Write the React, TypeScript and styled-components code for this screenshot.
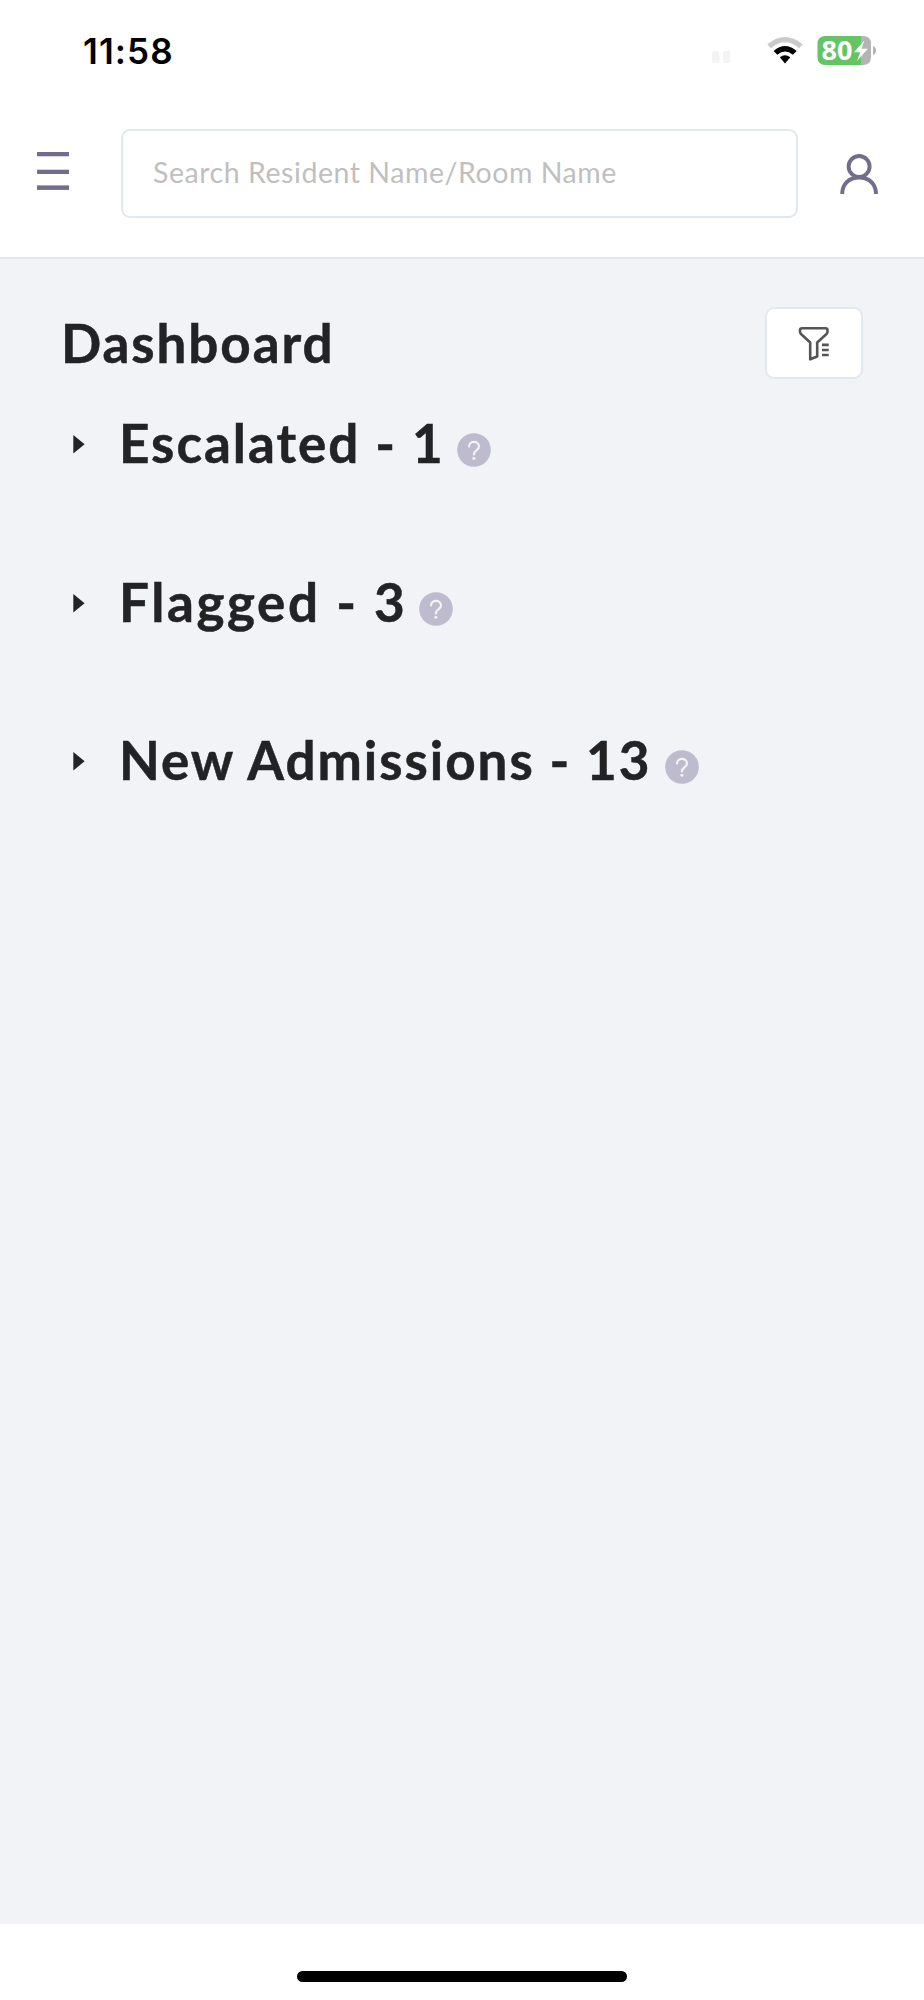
import React from 'react';
import styled, { createGlobalStyle } from 'styled-components';

const GlobalStyle = createGlobalStyle`
  *, *::before, *::after { box-sizing: border-box; }
  body { margin: 0; background: #fff; font-family: Lato, 'Open Sans', sans-serif; }
`;

const Screen = styled.div`
  width: 924px;
  height: 2000px;
  display: flex;
  flex-direction: column;
  background: #fff;
  overflow: hidden;
`;

const StatusBar = styled.div`
  height: 100px;
  padding: 30px 48px 0 83px;
  display: flex;
  align-items: flex-start;
  justify-content: space-between;
`;

const Clock = styled.div`
  font: 600 35px/42px Inter, sans-serif;
  letter-spacing: 1.1px;
  color: #000;
`;

const StatusIcons = styled.div`
  display: flex;
  svg { display: block; }
`;

const Header = styled.header`
  height: 159px;
  padding: 29px 46px 0 37px;
  display: flex;
  border-bottom: 2px solid #e2e8f0;
`;

const MenuButton = styled.button`
  width: 32px;
  height: 38px;
  margin: 23px 52px 0 0;
  padding: 0;
  border: 0;
  background: none;
  svg { display: block; }
`;

const SearchInput = styled.input`
  width: 677px;
  height: 89px;
  padding: 0 30px 4px;
  border: 2px solid #e2e8f0;
  border-radius: 9px;
  background: #fff;
  font: 400 28.5px/40px Lato, sans-serif;
  letter-spacing: 0.55px;
  outline: none;
  &::placeholder { color: #bfbfbf; opacity: 1; }
`;

const ProfileButton = styled.button`
  width: 38px;
  height: 42px;
  margin: 24px 0 0 42px;
  padding: 0;
  border: 0;
  background: none;
  svg { display: block; }
`;

const Main = styled.main`
  flex: 1;
  padding: 48px 61px 0 61px;
  background: #f1f3f7;
`;

const TitleRow = styled.div`
  height: 72px;
  display: flex;
  justify-content: space-between;
`;

const Heading = styled.h1<{ $spacing: number }>`
  margin: 0;
  font-size: 53px;
  font-weight: 700;
  line-height: 71px;
  letter-spacing: ${(p) => p.$spacing}px;
  color: #232325;
  -webkit-text-stroke: 0.5px #232325;
  white-space: nowrap;
`;

const FilterButton = styled.button`
  width: 98px;
  height: 72px;
  padding: 0;
  border: 2px solid #e2e8f0;
  border-radius: 9px;
  background: #fff;
  svg { display: block; margin: 3px 0 0 30px; }
`;

const Sections = styled.div`
  padding: 28px 0 0 12px;
`;

const Section = styled.section`
  height: 158.5px;
  display: flex;
  align-items: flex-start;
`;

const Caret = styled.svg`
  flex: none;
  width: 12px;
  height: 19px;
  margin: 28px 34px 0 0;
`;

const SectionTitle = styled(Heading).attrs({ as: 'h2' })<{ $width: number }>`
  width: ${(p) => p.$width}px;
  line-height: 72px;
`;

const Help = styled.svg`
  flex: none;
  width: 34px;
  height: 34px;
  margin-top: 26px;
`;

const HomeArea = styled.footer`
  height: 76px;
  padding-top: 46.5px;
  display: flex;
  justify-content: center;
  background: #fff;
`;

const HomeBar = styled.div`
  width: 330px;
  height: 11px;
  border-radius: 6px;
  background: #000;
`;

const groups = [
  { label: 'Escalated - 1', spacing: 2, width: 338 },
  { label: 'Flagged - 3', spacing: 2.6, width: 300 },
  { label: 'New Admissions - 13', spacing: 1.95, width: 546 },
];

const BatteryText = styled.text`
  font: 700 27px 'Open Sans', sans-serif;
  fill: #fff;
`;

export default function App() {
  return (
    <Screen>
      <GlobalStyle />
      <StatusBar>
        <Clock>11:58</Clock>
        <StatusIcons>
          <svg width="165" height="40" viewBox="711 30 165 40">
            <rect x="712" y="51" width="7.4" height="12" rx="1.5" fill="#f4f4f4" />
            <rect x="723" y="51" width="7.4" height="12" rx="1.5" fill="#f4f4f4" />
            <path d="M767.3 44.4Q785 29.6 802.8 44.4L799.1 48.3Q785 36.4 771 48.3Z" fill="#cacaca" />
            <path d="M773.6 51Q785 41 796.6 51L792.9 54.7Q785 48.2 777.3 54.7Z" fill="#000" />
            <path d="M779.8 57.3Q785 53 790.3 57.3L785 63.4Z" fill="#000" />
            <path d="M861 36h2q8 0 8 8v13q0 8-8 8h-2Z" fill="#b4b4b4" />
            <path d="M861 36v29h-35.500q-8 0-8-8v-13q0-8 8-8Z" fill="#65c466" />
            <path d="M873 46q3 1 3 4.500t-3 4.500Z" fill="#b4b4b4" />
            <BatteryText x="821.500" y="59.700">80</BatteryText>
            <path d="M864.300 40.500L854 52.300H860.200L857 61L867.800 48.800H861.600Z" fill="#fff" />
          </svg>
        </StatusIcons>
      </StatusBar>
      <Header>
        <MenuButton aria-label="Menu">
          <svg width="32" height="38" viewBox="0 0 32 38" fill="#736d8c">
            <rect width="32" height="4.300" />
            <rect y="17.700" width="32" height="4.300" />
            <rect y="33.400" width="32" height="4.500" />
          </svg>
        </MenuButton>
        <SearchInput placeholder="Search Resident Name/Room Name" />
        <ProfileButton aria-label="Profile">
          <svg width="38" height="42" viewBox="840 153 38 42" fill="none" stroke="#736d8c" strokeWidth="3.900">
            <circle cx="859.100" cy="166.500" r="10.500" />
            <path d="M842.200 194C842.200 184 849 177.500 859.100 177.500S876 184 876 194" />
          </svg>
        </ProfileButton>
      </Header>
      <Main>
        <TitleRow>
          <Heading $spacing={1.9}>Dashboard</Heading>
          <FilterButton aria-label="Filter">
            <svg width="34" height="38" viewBox="798 326 34 38" fill="none" stroke="#555" strokeWidth="2.600">
              <path
                d="M803 328.300H826.500Q828.500 328.300 828.500 330.300V331.500Q828.500 333 827.500 334L818.200 342.500V356.500L811.200 359.300V342.500L802 334Q801 333 801 331.500V330.300Q801 328.300 803 328.300Z"
                strokeLinejoin="round"
              />
              <path d="M823 344.900h6.700M823 350h6.700M823 355h6.700" />
            </svg>
          </FilterButton>
        </TitleRow>
        <Sections>
          {groups.map((g) => (
            <Section key={g.label}>
              <Caret viewBox="0 0 12 19">
                <path d="M.3 0L11.600 9.300L.3 18.600Z" fill="#232325" />
              </Caret>
              <SectionTitle $spacing={g.spacing} $width={g.width}>
                {g.label}
              </SectionTitle>
              <Help viewBox="0 0 34 34">
                <circle cx="17" cy="17" r="16.800" fill="#bfbbcf" />
                <path
                  d="M12 13.500C12 7.300 22 7.300 22 13.500C22 17.200 16.900 17 16.900 21.500"
                  fill="none"
                  stroke="#f1f3f7"
                  strokeWidth="2.200"
                  strokeLinecap="round"
                />
                <circle cx="16.900" cy="25.300" r="1.500" fill="#f1f3f7" />
              </Help>
            </Section>
          ))}
        </Sections>
      </Main>
      <HomeArea>
        <HomeBar />
      </HomeArea>
    </Screen>
  );
}
